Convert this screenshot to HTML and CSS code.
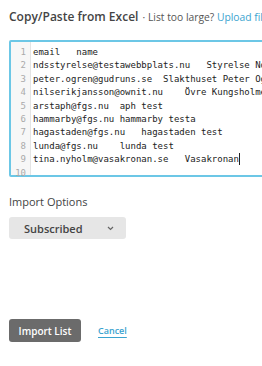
FILE: index.html
```html
<!DOCTYPE html>
<html lang="en">
<head>
  <meta charset="UTF-8" />
  <title>Import List</title>
  <link rel="stylesheet" href="styles.css">
</head>
<body>
  <div class="heading">
    <span class="title">Copy/Paste from Excel</span>
    <span class="hint">&middot; List too large? <a href="#">Upload file</a></span>
  </div>

  <div class="editor">
    <div class="gutter">
      <div>1</div><div>2</div><div>3</div><div>4</div><div>5</div>
      <div>6</div><div>7</div><div>8</div><div>9</div><div>10</div>
    </div>
    <pre class="code">email   name
ndsstyrelse@testawebbplats.nu   Styrelse Nds
peter.ogren@gudruns.se  Slakthuset Peter Ogren
nilserikjansson@ownit.nu    Övre Kungsholmen
arstaph@fgs.nu  aph test
hammarby@fgs.nu hammarby testa
hagastaden@fgs.nu   hagastaden test
lunda@fgs.nu    lunda test
tina.nyholm@vasakronan.se   Vasakronan<span class="cursor"></span>
</pre>
  </div>

  <h3 class="section">Import Options</h3>
  <div class="select">
    <span>Subscribed</span>
    <svg width="7" height="5" viewBox="0 0 7 5"><path d="M1 1l2.5 2.5L6 1" fill="none" stroke="#666" stroke-width="1.2"/></svg>
  </div>

  <div class="actions">
    <button class="primary">Import List</button>
    <a href="#" class="cancel">Cancel</a>
  </div>
</body>
</html>
```

FILE: styles.css
```css
body {
  margin: 0;
  padding: 7px 0 0 9px;
  font-family: "Open Sans", sans-serif;
  color: #444;
  background: #fff;
  overflow: hidden;
}
.heading {
  white-space: nowrap;
  line-height: 16px;
}
.title {
  font-size: 12px;
  font-weight: 600;
}
.hint {
  font-size: 10.3px;
  color: #555;
}
.hint a {
  color: #3aa3cf;
  text-decoration: none;
}
.editor {
  display: flex;
  margin-top: 15px;
  width: 300px;
  height: 137px;
  border: 2px solid #6cc7e6;
  border-radius: 2px;
  box-sizing: border-box;
}
.gutter {
  width: 20px;
  background: #f7f7f7;
  border-right: 1px solid #e4e4e4;
  padding: 4px 4px 0 0;
  box-sizing: border-box;
  text-align: right;
  font-family: "DejaVu Sans Mono", monospace;
  font-size: 9px;
  line-height: 13.4px;
  color: #aaa;
}
.code {
  margin: 0;
  padding: 4px 0 0 2px;
  font-family: "DejaVu Sans Mono", monospace;
  font-size: 9px;
  line-height: 13.4px;
  color: #222;
  white-space: pre;
  overflow: hidden;
}
.cursor {
  display: inline-block;
  width: 1px;
  height: 12px;
  background: #222;
  vertical-align: -3px;
}
.section {
  margin: 17px 0 0;
  font-size: 11px;
  font-weight: 400;
  line-height: 16px;
  color: #444;
}
.select {
  display: flex;
  align-items: center;
  justify-content: space-between;
  margin-top: 7px;
  width: 117px;
  height: 22px;
  padding: 0 12px 0 15px;
  box-sizing: border-box;
  background: #e6e6e6;
  border-radius: 3px;
  font-size: 11px;
  font-weight: 600;
  color: #444;
}
.actions {
  display: flex;
  align-items: center;
  gap: 17px;
  margin-top: 80px;
}
.primary {
  width: 72px;
  height: 23px;
  border: none;
  border-radius: 3px;
  background: #6b6b6b;
  color: #fff;
  font-family: "Open Sans", sans-serif;
  font-size: 10px;
  font-weight: 600;
  padding: 0;
}
.cancel {
  color: #3aa3cf;
  font-size: 9px;
  font-weight: 600;
  text-decoration: underline;
  text-underline-offset: 3px;
}
```
